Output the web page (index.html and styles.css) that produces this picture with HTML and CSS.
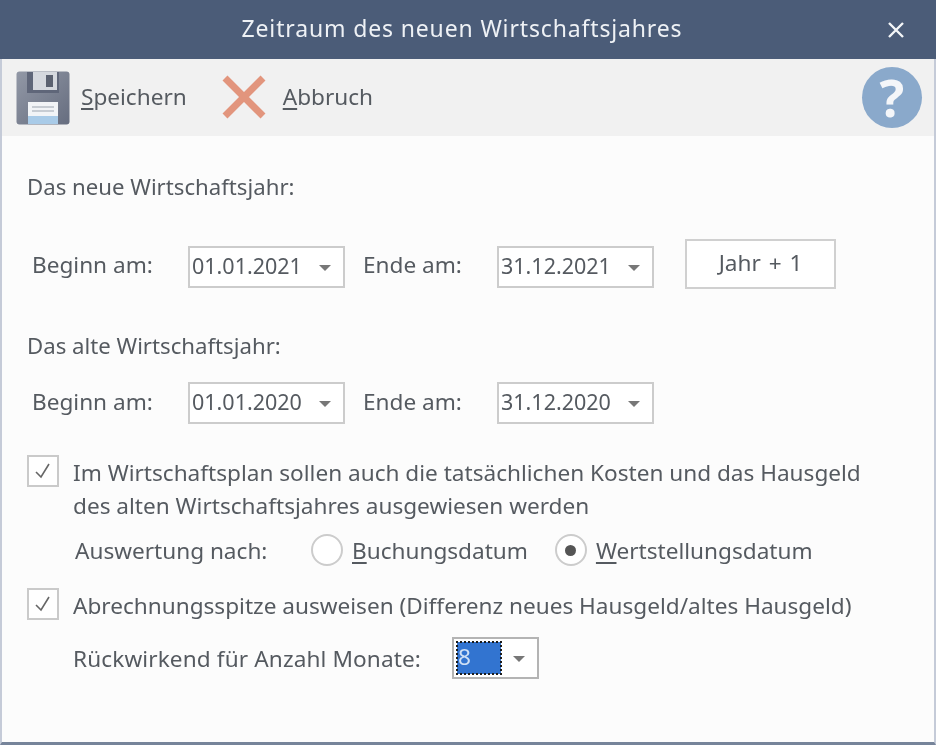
FILE: index.html
```html
<!DOCTYPE html>
<html lang="de">
<head>
    <meta charset="UTF-8">
    <title>Zeitraum des neuen Wirtschaftsjahres</title>
    <link rel="stylesheet" href="styles.css">
</head>
<body>
    <div class="window">
        <div class="titlebar">
            <span class="title">Zeitraum des neuen Wirtschaftsjahres</span>
            <svg class="close" width="18" height="18" viewBox="0 0 18 18"><path d="M2 2 L16 16 M16 2 L2 16" stroke="#f4f6f8" stroke-width="2.4" fill="none"/></svg>
        </div>

        <div class="toolbar">
            <div class="tool tool-save">
                <svg width="54" height="54" viewBox="0 0 54 54">
                    <defs>
                        <linearGradient id="disk" x1="0" y1="0" x2="1" y2="1">
                            <stop offset="0" stop-color="#9298a6"/>
                            <stop offset="1" stop-color="#666d7f"/>
                        </linearGradient>
                    </defs>
                    <rect x="0.5" y="0.5" width="53" height="53" rx="3" fill="url(#disk)"/>
                    <rect x="11" y="1" width="32" height="21" fill="#5f6679"/>
                    <rect x="17" y="1" width="24" height="18" fill="#d5d8de"/>
                    <rect x="30" y="4" width="7" height="12" fill="#5b6170"/>
                    <rect x="12" y="31" width="30" height="22" fill="#f2f4f7"/>
                    <rect x="12" y="45" width="30" height="8" fill="#a9cbe8"/>
                    <path d="M16 36 H38 M16 40 H38" stroke="#b9bec8" stroke-width="1.4"/>
                </svg>
                <span class="tool-label"><u>S</u>peichern</span>
            </div>
            <div class="tool tool-cancel">
                <svg width="46" height="46" viewBox="0 0 46 46"><path d="M4 4 L42 42 M42 4 L4 42" stroke="#e2957d" stroke-width="7" fill="none"/></svg>
                <span class="tool-label"><u>A</u>bbruch</span>
            </div>
            <div class="help">?</div>
        </div>

        <div class="content">
            <div class="heading heading-new">Das neue Wirtschaftsjahr:</div>
            <div class="date-row date-row-new">
                <span class="date-label">Beginn am:</span>
                <div class="combo combo-date"><span class="combo-value">01.01.2021</span><i class="arrow"></i></div>
                <span class="date-label date-label-end">Ende am:</span>
                <div class="combo combo-date"><span class="combo-value">31.12.2021</span><i class="arrow"></i></div>
                <div class="btn">Jahr + 1</div>
            </div>

            <div class="heading heading-old">Das alte Wirtschaftsjahr:</div>
            <div class="date-row date-row-old">
                <span class="date-label">Beginn am:</span>
                <div class="combo combo-date"><span class="combo-value">01.01.2020</span><i class="arrow"></i></div>
                <span class="date-label date-label-end">Ende am:</span>
                <div class="combo combo-date"><span class="combo-value">31.12.2020</span><i class="arrow"></i></div>
            </div>

            <div class="check-row check-row-plan">
                <span class="checkbox"><svg width="20" height="18" viewBox="0 0 20 18"><path d="M3 10 L8 15 L16 2" stroke="#666" stroke-width="1.6" fill="none"/></svg></span>
                <span class="check-text">Im Wirtschaftsplan sollen auch die tatsächlichen Kosten und das Hausgeld<br>des alten Wirtschaftsjahres ausgewiesen werden</span>
            </div>
            <div class="radio-row">
                <span class="radio-label">Auswertung nach:</span>
                <span class="radio"></span>
                <span class="radio-text radio-text-first"><u>B</u>uchungsdatum</span>
                <span class="radio radio-on"></span>
                <span class="radio-text"><u>W</u>ertstellungsdatum</span>
            </div>

            <div class="check-row check-row-spitze">
                <span class="checkbox"><svg width="20" height="18" viewBox="0 0 20 18"><path d="M3 10 L8 15 L16 2" stroke="#666" stroke-width="1.6" fill="none"/></svg></span>
                <span class="check-text">Abrechnungsspitze ausweisen (Differenz neues Hausgeld/altes Hausgeld)</span>
            </div>
            <div class="months-row">
                <span class="months-label">Rückwirkend für Anzahl Monate:</span>
                <div class="combo combo-months"><span class="months-value">8</span><i class="arrow"></i></div>
            </div>
        </div>
    </div>
</body>
</html>
```

FILE: styles.css
```css
html, body {
    margin: 0;
    padding: 0;
}
body {
    width: 936px;
    height: 745px;
    overflow: hidden;
    font-family: "Noto Sans", "Open Sans", sans-serif;
    font-size: 22.6px;
    color: #555a60;
}
u {
    text-underline-offset: 3px;
    text-decoration-thickness: 2px;
}
.window {
    width: 936px;
    height: 745px;
    box-sizing: border-box;
    display: flex;
    flex-direction: column;
    background: #fcfcfc;
    border-left: 2px solid #c5cbd8;
    border-right: 2px solid #c5cbd8;
    border-bottom: 3px solid #76849a;
    filter: blur(0.5px);
}
.titlebar {
    height: 59px;
    margin: 0 -2px;
    flex: none;
    display: flex;
    align-items: center;
    justify-content: center;
    position: relative;
    background: #4b5c78;
}
.title {
    color: #eef1f5;
    font-size: 23px;
    letter-spacing: 0.85px;
    padding: 0 12px 4px 0;
}
.close {
    position: absolute;
    left: 887px;
    top: 21px;
}
.toolbar {
    height: 77px;
    flex: none;
    box-sizing: border-box;
    display: flex;
    align-items: center;
    padding-left: 14px;
    background: #f1f1f1;
}
.tool {
    display: flex;
    align-items: center;
}
.tool-label {
    padding-bottom: 2px;
}
.tool-save svg {
    margin-right: 11px;
}
.tool-cancel {
    margin-left: 34px;
    padding-bottom: 1px;
}
.tool-cancel svg {
    margin-right: 16px;
}
.help {
    width: 60px;
    height: 61px;
    margin-left: auto;
    margin-right: 12px;
    border-radius: 50%;
    background: #8aa9cb;
    color: #f4f6f9;
    font-family: "Open Sans", sans-serif;
    font-weight: 700;
    font-size: 52px;
    line-height: 60px;
    text-align: center;
}
.content {
    padding: 36px 0 0 25px;
}
.heading {
    line-height: 30px;
    font-size: 22.2px;
}
.date-row {
    display: flex;
    align-items: center;
    padding-left: 5px;
}
.date-row-new {
    margin-top: 37px;
    height: 50px;
}
.date-row-new .combo {
    margin-top: 6px;
}
.heading-old {
    margin-top: 42px;
}
.date-row-old {
    margin-top: 21px;
    height: 42px;
}
.date-row-old .date-label {
    padding-bottom: 3px;
}
.date-label {
    width: 156px;
}
.date-label-end {
    width: 134px;
    margin-left: 18px;
}
.combo {
    box-sizing: border-box;
    display: flex;
    align-items: center;
    position: relative;
    background: #fff;
    border: 2px solid #cccccc;
}
.combo-date {
    width: 157px;
    height: 42px;
    padding-left: 2px;
}
.combo-value {
    font-size: 21.5px;
    padding-bottom: 3px;
}
.arrow {
    width: 0;
    height: 0;
    position: absolute;
    right: 12px;
    top: 17px;
    border-left: 6px solid transparent;
    border-right: 6px solid transparent;
    border-top: 6px solid #777;
}
.btn {
    box-sizing: border-box;
    width: 151px;
    height: 50px;
    margin-left: 31px;
    line-height: 43px;
    text-align: center;
    word-spacing: 2px;
    background: #fff;
    border: 2px solid #d0d0d0;
}
.check-row {
    display: flex;
    align-items: flex-start;
}
.check-row-plan {
    margin-top: 31px;
}
.check-row-spitze {
    margin-top: 17px;
}
.checkbox {
    box-sizing: border-box;
    width: 32px;
    height: 32px;
    flex: none;
    display: flex;
    align-items: center;
    justify-content: center;
    background: #fff;
    border: 2px solid #cacaca;
}
.check-text {
    margin: 1px 0 0 14px;
    line-height: 33px;
}
.radio-row {
    display: flex;
    align-items: center;
    height: 42px;
    margin-top: 7px;
    padding-left: 48px;
}
.radio-label {
    width: 236px;
}
.radio {
    box-sizing: border-box;
    width: 32px;
    height: 32px;
    border-radius: 50%;
    background: #fff;
    border: 2px solid #cccccc;
    display: flex;
    align-items: center;
    justify-content: center;
}
.radio-on::after {
    content: "";
    width: 11px;
    height: 11px;
    border-radius: 50%;
    background: #555;
}
.radio-text {
    margin-left: 9px;
}
.radio-text-first {
    margin-right: 27px;
}
.months-row {
    display: flex;
    align-items: center;
    margin-top: 15px;
    padding-left: 46px;
}
.months-label {
    width: 379px;
    letter-spacing: 0.12px;
}
.combo-months {
    width: 87px;
    height: 42px;
    border-color: #b4b4b4;
    padding: 3px;
}
.months-value {
    box-sizing: border-box;
    width: 44px;
    height: 100%;
    line-height: 30px;
    background: #3274d0;
    color: #cfe0f5;
    outline: 2px dotted #1c1c1c;
    outline-offset: -1px;
    padding-left: 1px;
}
```
